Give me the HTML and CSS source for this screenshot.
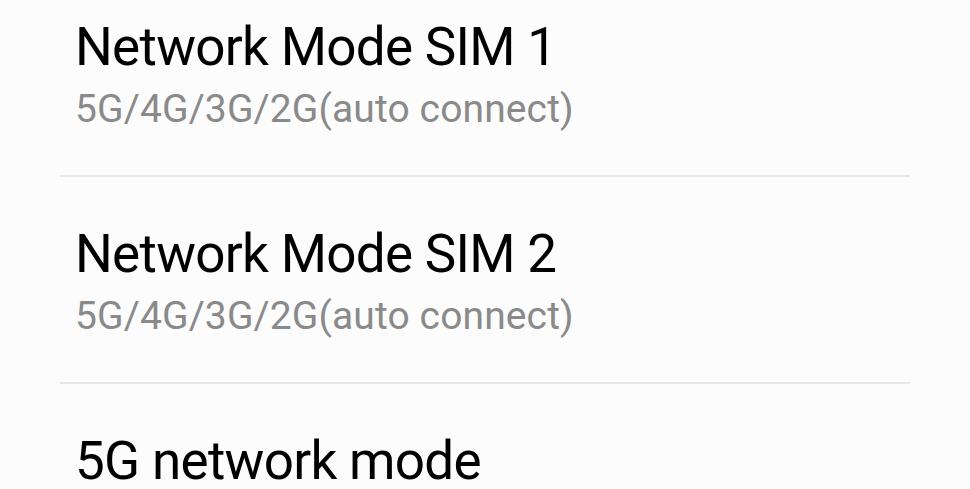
FILE: index.html
```html
<!DOCTYPE html>
<html lang="en">
<head>
    <meta charset="UTF-8">
    <meta name="viewport" content="width=device-width, initial-scale=1.0">
    <title>Mobile network</title>
    <link rel="stylesheet" href="styles.css">
</head>
<body>
    <div class="list">
        <div class="item">
            <div class="item-title">Network Mode SIM 1</div>
            <div class="item-sub">5G/4G/3G/2G(auto connect)</div>
        </div>
        <div class="item">
            <div class="item-title">Network Mode SIM 2</div>
            <div class="item-sub">5G/4G/3G/2G(auto connect)</div>
        </div>
        <div class="item">
            <div class="item-title">5G network mode</div>
        </div>
    </div>
</body>
</html>
```

FILE: styles.css
```css
*{
    margin:0;
    padding:0;
    box-sizing: border-box;
}
html,body{
    height:100%;
    overflow:hidden;
}
body{
    background-color: #fcfcfc;
    font-family: Roboto, "Noto Sans", sans-serif;
}
.list{
    margin: -30px 60px 0 60px;   /* list is scrolled a little */
}
.item{
    display:flex;
    flex-direction: column;
    gap:8px;
    padding:46px 0 43px 15px;
    border-bottom: 2px solid #e6e6e6;
}
.item-title{
    font-size:53px;
    line-height:62px;
    letter-spacing: -0.7px;
    color:#000;
}
.item-sub{
    font-size:39px;
    line-height:46px;
    letter-spacing: 0.12px;
    color:#8a8a8a;
}
```
